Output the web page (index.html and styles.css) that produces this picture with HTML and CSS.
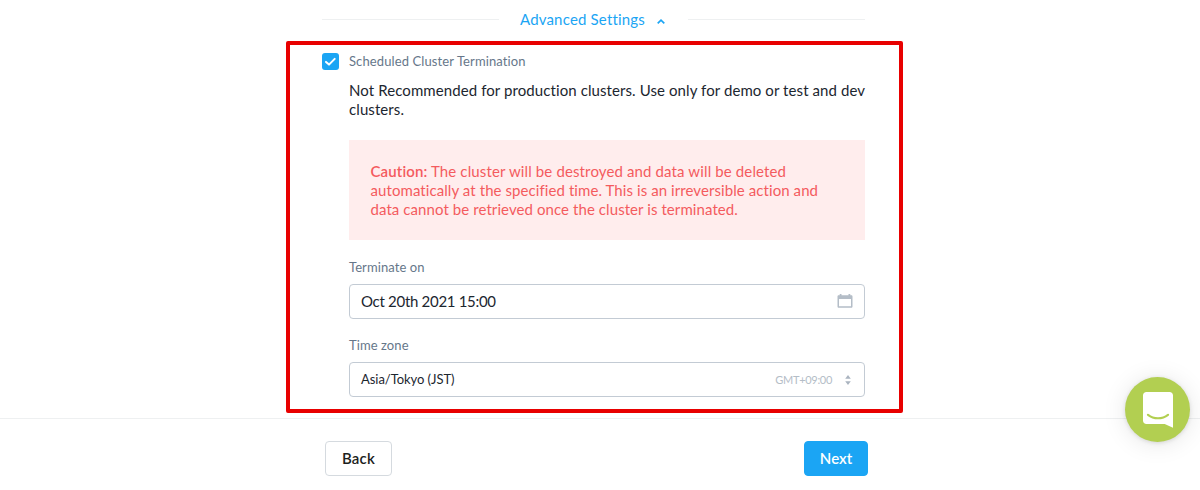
FILE: index.html
```
<!DOCTYPE html>
<html lang="en">
<head>
    <meta charset="UTF-8">
    <meta name="viewport" content="width=device-width, initial-scale=1.0">
    <title>Advanced Settings</title>
    <link rel="stylesheet" href="styles.css">
</head>
<body>
    <main class="content">
        <div class="settings-header">
            <span class="line"></span>
            <a class="settings-toggle">
                <span class="toggle-text">Advanced Settings</span>
                <svg width="8" height="5" viewBox="0 0 8 5" fill="none" stroke="#1ba5f4" stroke-width="1.7"><path d="M.7 4.3 4 1.2l3.3 3.1"/></svg>
            </a>
            <span class="line"></span>
        </div>

        <section class="termination">
            <label class="check-row">
                <span class="checkbox">
                    <svg width="17" height="17" viewBox="0 0 17 17" fill="none" stroke="#fff" stroke-width="2" stroke-linecap="round" stroke-linejoin="round"><path d="M4 8.9 7 11.6l5.7-5.7"/></svg>
                </span>
                <span class="label check-label">Scheduled Cluster Termination</span>
            </label>

            <div class="fields">
                <p class="note">Not Recommended for production clusters. Use only for demo or test and dev<br>clusters.</p>

                <div class="caution">
                    <span class="first"><b>Caution:</b> The cluster will be destroyed and data will be deleted</span><br>
                    automatically at the specified time. This is an irreversible action and<br>
                    data cannot be retrieved once the cluster is terminated.
                </div>

                <div class="label date-label">Terminate on</div>
                <div class="input">
                    <span class="date-value">Oct 20th 2021 15:00</span>
                    <svg class="calendar" width="16" height="15" viewBox="0 0 16 15">
                        <path fill="#b4bdc7" fill-rule="evenodd" d="M2.7 0h1.8v1.3h7V0h1.8v1.3h.9c.8 0 1.3.5 1.3 1.300v9.900c0 .8-.5 1.300-1.300 1.300H1.800c-.8 0-1.300-.5-1.300-1.300V2.600c0-.8.5-1.300 1.300-1.300h.9zM2 5v7.300h12V5z"/>
                    </svg>
                </div>

                <div class="label zone-label">Time zone</div>
                <div class="input">
                    <span class="zone-value">Asia/Tokyo (JST)</span>
                    <span class="offset">GMT+09:00</span>
                    <svg class="sort" width="6" height="10" viewBox="0 0 6 10" fill="#aab4c0"><path d="M3 0 5.8 3.8H.2zM3 10 .2 6.2h5.6z"/></svg>
                </div>
            </div>
        </section>
    </main>

    <footer class="footer">
        <div class="actions">
            <button class="btn btn-back">Back</button>
            <button class="btn btn-next">Next</button>
        </div>
    </footer>

    <div class="chat">
        <svg width="30" height="37" viewBox="0 0 30 37">
            <path fill="#fff" d="M3.5 0h23C28.6 0 30 1.4 30 3.5v32.3L21.7 32H3.5C1.4 32 0 30.6 0 28.5v-25C0 1.4 1.4 0 3.5 0z"/>
            <path fill="none" stroke="#b2cf51" stroke-width="2.2" stroke-linecap="round" d="M5 22.8c5.8 4.6 14.2 4.6 20 0"/>
        </svg>
    </div>
</body>
</html>
```
FILE: styles.css
```
* {
    box-sizing: border-box;
}
body {
    margin: 0;
    height: 490px;
    overflow: hidden;
    background: #fff;
    color: #1c262f;
    font-family: Lato, sans-serif;
    font-size: 15px;
    font-variant-ligatures: none;
}
.content {
    width: 617px;
    height: 418px;
    margin-left: 286px;
}
.settings-header {
    display: flex;
    align-items: center;
    justify-content: space-between;
    height: 41px;
    padding: 0 38px 2px 36px;
}
.line {
    width: 177px;
    height: 1px;
    background: #eef0f1;
}
.settings-toggle {
    display: flex;
    align-items: center;
    gap: 12px;
    padding: 0 2px 1px 0;
    color: #1ba5f4;
}
.settings-toggle svg {
    margin-top: 5px;
}
.toggle-text {
    letter-spacing: 0.18px;
    white-space: nowrap;
}
.termination {
    height: 372px;
    padding: 8px 33px 0 32px;
    border: 4px solid #e80000;
    border-radius: 2px;
}
.check-row {
    display: flex;
    align-items: center;
    gap: 10px;
    height: 17px;
}
.checkbox {
    width: 17px;
    height: 17px;
    border-radius: 3px;
    background: #1ba5f4;
}
.checkbox svg {
    display: block;
}
.label {
    color: #66778a;
    font-size: 13px;
    line-height: 16px;
    letter-spacing: 0.08px;
}
.check-label {
    padding-bottom: 2px;
    letter-spacing: 0.11px;
}
.fields {
    margin-left: 27px;
}
.note {
    margin: 11px 0 21px;
    line-height: 19px;
    letter-spacing: 0.09px;
    white-space: nowrap;
}
.caution {
    width: 516px;
    height: 100px;
    padding: 22px 21.5px;
    background: #ffeded;
    color: #f45b5e;
    line-height: 19px;
    letter-spacing: 0.08px;
    white-space: nowrap;
}
.caution .first {
    letter-spacing: 0.13px;
}
.caution b {
    font-weight: 600;
}
.date-label {
    margin: 19px 0 9px;
}
.zone-label {
    margin: 18px 0 9px;
}
.input {
    display: flex;
    align-items: center;
    width: 516px;
    height: 35px;
    padding: 0 11px;
    border: 1px solid #c3cbd4;
    border-radius: 4px;
}
.calendar {
    margin-left: auto;
}
.date-value {
    padding-bottom: 2px;
    letter-spacing: -0.3px;
}
.zone-value {
    padding-bottom: 2px;
    font-size: 13px;
    letter-spacing: -0.05px;
}
.offset {
    margin-left: auto;
    padding-bottom: 1px;
    color: #b4bdc7;
    font-size: 11px;
    letter-spacing: -0.3px;
}
.sort {
    margin: 0 2px 0 13px;
}
.footer {
    height: 72px;
    padding-top: 22px;
    border-top: 1px solid #eef0f1;
}
.actions {
    display: flex;
    justify-content: space-between;
    width: 543px;
    margin-left: 325px;
}
.btn {
    height: 35px;
    padding: 0 0 2px;
    border: 1px solid #d5dadf;
    border-radius: 4px;
    background: #fff;
    color: #1c1e20;
    font-family: inherit;
    font-size: 15px;
    font-weight: 600;
}
.btn-back {
    width: 67px;
    letter-spacing: 0.2px;
}
.btn-next {
    width: 64px;
    border-color: #1ba5f4;
    background: #1ba5f4;
    color: #fff;
}
.chat {
    display: flex;
    align-items: center;
    justify-content: center;
    position: absolute;
    top: 377px;
    left: 1125px;
    width: 65px;
    height: 65px;
    padding-top: 2px;
    border-radius: 50%;
    background: #b2cf51;
    box-shadow: 0 1px 4px rgba(0, 0, 0, 0.12), 0 2px 24px rgba(0, 0, 0, 0.1);
}
```
